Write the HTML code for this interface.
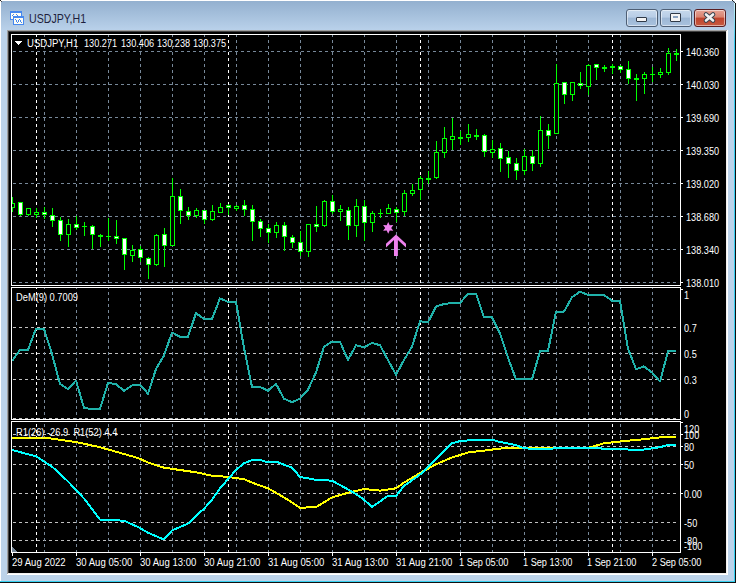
<!DOCTYPE html>
<html><head><meta charset="utf-8"><style>
html,body{margin:0;padding:0;}
body{width:738px;height:583px;overflow:hidden;position:relative;background:#fff;font-family:"Liberation Sans",sans-serif;}
.win{position:absolute;left:0;top:0;width:735px;height:582px;background:#bcd3ea;}
.tb{position:absolute;left:1px;top:1px;width:733px;height:29px;background:linear-gradient(#93b0cf,#b9d1ea);}
.title{position:absolute;left:29px;top:12px;font-size:12.5px;line-height:14px;color:#1e1e3c;transform:scaleX(0.85);transform-origin:0 0;}
.client{position:absolute;left:7px;top:30px;width:721px;height:545px;background:#000;}
svg{position:absolute;left:0;top:0;}
.t{position:absolute;font-size:10px;color:#fff;white-space:nowrap;line-height:10px;transform:scaleX(0.915);transform-origin:0 0;}
.th{position:absolute;font-size:10px;color:#fff;white-space:nowrap;line-height:10px;transform:scaleX(0.955);transform-origin:0 0;}
.ti{position:absolute;font-size:10px;color:#fff;white-space:nowrap;line-height:10px;transform:scaleX(0.93);transform-origin:0 0;}
.tt{position:absolute;font-size:10px;color:#fff;white-space:nowrap;line-height:10px;transform:scaleX(0.955);transform-origin:0 0;}
.btn{position:absolute;top:9px;width:30px;height:16px;border:1px solid #4e5f75;border-radius:3px;box-sizing:content-box;
background:linear-gradient(#c6d8ec 0%,#b8cde6 45%,#9db7d5 50%,#a9c2de 100%);box-shadow:inset 0 0 0 1px rgba(255,255,255,.5);}
.close{background:linear-gradient(#e7a496 0%,#d9826f 45%,#c0432c 50%,#c75a40 100%);border-color:#5a1e22;}
</style></head><body>
<div class="win"></div>
<div class="tb"></div>
<div style="position:absolute;left:0;top:0;width:736px;height:1px;background:#fff"></div>
<div style="position:absolute;left:0;top:0;width:1px;height:582px;background:#fff"></div>
<div style="position:absolute;left:734px;top:2px;width:1px;height:580px;background:linear-gradient(#d4f4fa 0px,#9ee6f6 14px,#38cdf0 40px,#35d0f0 100%)"></div>
<div style="position:absolute;left:735px;top:3px;width:1px;height:580px;background:#101010"></div>
<div style="position:absolute;left:732px;top:0px;width:1px;height:1px;background:#202020"></div>
<div style="position:absolute;left:733px;top:1px;width:1px;height:1px;background:#303030"></div>
<div style="position:absolute;left:734px;top:2px;width:1px;height:1px;background:#404040"></div>
<div style="position:absolute;left:0px;top:0px;width:1px;height:1px;background:#202020"></div>
<div style="position:absolute;left:1px;top:1px;width:1px;height:1px;background:#505050"></div>
<div style="position:absolute;left:0;top:581px;width:735px;height:1px;background:#35d0f0"></div>
<div style="position:absolute;left:0;top:582px;width:736px;height:1px;background:#101010"></div>
<div style="position:absolute;left:7px;top:30px;width:721px;height:545px;background:#fff"></div>
<div style="position:absolute;left:7px;top:30px;width:720px;height:544px;background:#a0a0a0"></div>
<div style="position:absolute;left:8px;top:31px;width:719px;height:543px;background:#f0f0f0"></div>
<div style="position:absolute;left:8px;top:31px;width:718px;height:542px;background:#404040"></div>
<div style="position:absolute;left:9px;top:32px;width:717px;height:541px;background:#000"></div>
<div class="title">USDJPY,H1</div>
<svg width="26" height="27" style="left:0;top:0" viewBox="0 0 26 27" shape-rendering="crispEdges">
<rect x="10" y="11" width="12" height="9" fill="#4688ee"/><rect x="11" y="13" width="10" height="6" fill="#fffef4"/>
<rect x="13" y="16" width="11" height="9" fill="#4688ee"/><rect x="14" y="18" width="9" height="6" fill="#fffef4"/>
<path d="M12 15h1M13 14h1M16 14h1M17 15h1M15 19h1M16 20h1M16 21h1M17 22h1M18 21h1M18 20h1M19 19h1M20 20h1M20 21h1M21 22h1" stroke="#4688ee" transform="translate(0,0.5)"/>
</svg>
<div class="btn" style="left:626px"><div style="position:absolute;left:9px;top:7px;width:9px;height:3px;border:1px solid #303a48;border-radius:1px;background:#f4f4f4"></div></div>
<div class="btn" style="left:660px"><div style="position:absolute;left:9px;top:3px;width:9px;height:7px;border:1px solid #303a48;border-radius:1px;background:#f4f4f4"><div style="position:absolute;left:2px;top:2px;width:5px;height:2px;background:#8aa2c0;border:0px solid #5a6a80"></div></div></div>
<div class="btn close" style="left:694px"><svg width="30" height="16" style="left:0;top:0"><path d="M11 4.5L18 10.5M18 4.5L11 10.5" stroke="#3a4450" stroke-width="4.6" stroke-linecap="round"/><path d="M11 4.5L18 10.5M18 4.5L11 10.5" stroke="#f2f2f2" stroke-width="2.6" stroke-linecap="round"/></svg></div>
<svg width="738" height="583" viewBox="0 0 738 583" shape-rendering="crispEdges"><defs>
<clipPath id="cm"><rect x="12" y="35" width="668" height="250"/></clipPath>
<clipPath id="c1"><rect x="12" y="288" width="668" height="131"/></clipPath>
<clipPath id="c2"><rect x="12" y="422" width="668" height="130"/></clipPath>
</defs><path d="M12 51.5H678" stroke="#778899" stroke-dasharray="3 3" stroke-dashoffset="5"/><path d="M12 84.5H678" stroke="#778899" stroke-dasharray="3 3" stroke-dashoffset="5"/><path d="M12 117.5H678" stroke="#778899" stroke-dasharray="3 3" stroke-dashoffset="5"/><path d="M12 150.5H678" stroke="#778899" stroke-dasharray="3 3" stroke-dashoffset="5"/><path d="M12 183.5H678" stroke="#778899" stroke-dasharray="3 3" stroke-dashoffset="5"/><path d="M12 216.5H678" stroke="#778899" stroke-dasharray="3 3" stroke-dashoffset="5"/><path d="M12 249.5H678" stroke="#778899" stroke-dasharray="3 3" stroke-dashoffset="5"/><path d="M12 282.5H678" stroke="#778899" stroke-dasharray="3 3" stroke-dashoffset="5"/><path d="M44.5 35V285" stroke="#778899" stroke-dasharray="3 3" stroke-dashoffset="1"/><path d="M76.5 35V285" stroke="#778899" stroke-dasharray="3 3" stroke-dashoffset="1"/><path d="M108.5 35V285" stroke="#778899" stroke-dasharray="3 3" stroke-dashoffset="1"/><path d="M140.5 35V285" stroke="#778899" stroke-dasharray="3 3" stroke-dashoffset="1"/><path d="M172.5 35V285" stroke="#778899" stroke-dasharray="3 3" stroke-dashoffset="1"/><path d="M204.5 35V285" stroke="#778899" stroke-dasharray="3 3" stroke-dashoffset="1"/><path d="M236.5 35V285" stroke="#778899" stroke-dasharray="3 3" stroke-dashoffset="1"/><path d="M268.5 35V285" stroke="#778899" stroke-dasharray="3 3" stroke-dashoffset="1"/><path d="M300.5 35V285" stroke="#778899" stroke-dasharray="3 3" stroke-dashoffset="1"/><path d="M332.5 35V285" stroke="#778899" stroke-dasharray="3 3" stroke-dashoffset="1"/><path d="M364.5 35V285" stroke="#778899" stroke-dasharray="3 3" stroke-dashoffset="1"/><path d="M396.5 35V285" stroke="#778899" stroke-dasharray="3 3" stroke-dashoffset="1"/><path d="M428.5 35V285" stroke="#778899" stroke-dasharray="3 3" stroke-dashoffset="1"/><path d="M460.5 35V285" stroke="#778899" stroke-dasharray="3 3" stroke-dashoffset="1"/><path d="M492.5 35V285" stroke="#778899" stroke-dasharray="3 3" stroke-dashoffset="1"/><path d="M524.5 35V285" stroke="#778899" stroke-dasharray="3 3" stroke-dashoffset="1"/><path d="M556.5 35V285" stroke="#778899" stroke-dasharray="3 3" stroke-dashoffset="1"/><path d="M588.5 35V285" stroke="#778899" stroke-dasharray="3 3" stroke-dashoffset="1"/><path d="M620.5 35V285" stroke="#778899" stroke-dasharray="3 3" stroke-dashoffset="1"/><path d="M652.5 35V285" stroke="#778899" stroke-dasharray="3 3" stroke-dashoffset="1"/><path d="M36.5 35V285" stroke="#ffffff" stroke-dasharray="3 3" stroke-dashoffset="1"/><path d="M228.5 35V285" stroke="#ffffff" stroke-dasharray="3 3" stroke-dashoffset="1"/><path d="M420.5 35V285" stroke="#ffffff" stroke-dasharray="3 3" stroke-dashoffset="1"/><path d="M612.5 35V285" stroke="#ffffff" stroke-dasharray="3 3" stroke-dashoffset="1"/><path d="M12 327.5H678" stroke="#c0c0c0" stroke-dasharray="3 3" stroke-dashoffset="5"/><path d="M12 353.5H678" stroke="#c0c0c0" stroke-dasharray="3 3" stroke-dashoffset="5"/><path d="M12 379.5H678" stroke="#c0c0c0" stroke-dasharray="3 3" stroke-dashoffset="5"/><path d="M12 418.5H678" stroke="#c0c0c0" stroke-dasharray="3 3" stroke-dashoffset="5"/><path d="M44.5 288V419" stroke="#778899" stroke-dasharray="3 3" stroke-dashoffset="2"/><path d="M76.5 288V419" stroke="#778899" stroke-dasharray="3 3" stroke-dashoffset="2"/><path d="M108.5 288V419" stroke="#778899" stroke-dasharray="3 3" stroke-dashoffset="2"/><path d="M140.5 288V419" stroke="#778899" stroke-dasharray="3 3" stroke-dashoffset="2"/><path d="M172.5 288V419" stroke="#778899" stroke-dasharray="3 3" stroke-dashoffset="2"/><path d="M204.5 288V419" stroke="#778899" stroke-dasharray="3 3" stroke-dashoffset="2"/><path d="M236.5 288V419" stroke="#778899" stroke-dasharray="3 3" stroke-dashoffset="2"/><path d="M268.5 288V419" stroke="#778899" stroke-dasharray="3 3" stroke-dashoffset="2"/><path d="M300.5 288V419" stroke="#778899" stroke-dasharray="3 3" stroke-dashoffset="2"/><path d="M332.5 288V419" stroke="#778899" stroke-dasharray="3 3" stroke-dashoffset="2"/><path d="M364.5 288V419" stroke="#778899" stroke-dasharray="3 3" stroke-dashoffset="2"/><path d="M396.5 288V419" stroke="#778899" stroke-dasharray="3 3" stroke-dashoffset="2"/><path d="M428.5 288V419" stroke="#778899" stroke-dasharray="3 3" stroke-dashoffset="2"/><path d="M460.5 288V419" stroke="#778899" stroke-dasharray="3 3" stroke-dashoffset="2"/><path d="M492.5 288V419" stroke="#778899" stroke-dasharray="3 3" stroke-dashoffset="2"/><path d="M524.5 288V419" stroke="#778899" stroke-dasharray="3 3" stroke-dashoffset="2"/><path d="M556.5 288V419" stroke="#778899" stroke-dasharray="3 3" stroke-dashoffset="2"/><path d="M588.5 288V419" stroke="#778899" stroke-dasharray="3 3" stroke-dashoffset="2"/><path d="M620.5 288V419" stroke="#778899" stroke-dasharray="3 3" stroke-dashoffset="2"/><path d="M652.5 288V419" stroke="#778899" stroke-dasharray="3 3" stroke-dashoffset="2"/><path d="M36.5 288V419" stroke="#ffffff" stroke-dasharray="3 3" stroke-dashoffset="2"/><path d="M228.5 288V419" stroke="#ffffff" stroke-dasharray="3 3" stroke-dashoffset="2"/><path d="M420.5 288V419" stroke="#ffffff" stroke-dasharray="3 3" stroke-dashoffset="2"/><path d="M612.5 288V419" stroke="#ffffff" stroke-dasharray="3 3" stroke-dashoffset="2"/><path d="M12 434.5H678" stroke="#c0c0c0" stroke-dasharray="3 3" stroke-dashoffset="5"/><path d="M12 446.5H678" stroke="#c0c0c0" stroke-dasharray="3 3" stroke-dashoffset="5"/><path d="M12 464.5H678" stroke="#c0c0c0" stroke-dasharray="3 3" stroke-dashoffset="5"/><path d="M12 493.5H678" stroke="#c0c0c0" stroke-dasharray="3 3" stroke-dashoffset="5"/><path d="M12 522.5H678" stroke="#c0c0c0" stroke-dasharray="3 3" stroke-dashoffset="5"/><path d="M12 540.5H678" stroke="#c0c0c0" stroke-dasharray="3 3" stroke-dashoffset="5"/><path d="M44.5 422V552" stroke="#778899" stroke-dasharray="3 3" stroke-dashoffset="4"/><path d="M76.5 422V552" stroke="#778899" stroke-dasharray="3 3" stroke-dashoffset="4"/><path d="M108.5 422V552" stroke="#778899" stroke-dasharray="3 3" stroke-dashoffset="4"/><path d="M140.5 422V552" stroke="#778899" stroke-dasharray="3 3" stroke-dashoffset="4"/><path d="M172.5 422V552" stroke="#778899" stroke-dasharray="3 3" stroke-dashoffset="4"/><path d="M204.5 422V552" stroke="#778899" stroke-dasharray="3 3" stroke-dashoffset="4"/><path d="M236.5 422V552" stroke="#778899" stroke-dasharray="3 3" stroke-dashoffset="4"/><path d="M268.5 422V552" stroke="#778899" stroke-dasharray="3 3" stroke-dashoffset="4"/><path d="M300.5 422V552" stroke="#778899" stroke-dasharray="3 3" stroke-dashoffset="4"/><path d="M332.5 422V552" stroke="#778899" stroke-dasharray="3 3" stroke-dashoffset="4"/><path d="M364.5 422V552" stroke="#778899" stroke-dasharray="3 3" stroke-dashoffset="4"/><path d="M396.5 422V552" stroke="#778899" stroke-dasharray="3 3" stroke-dashoffset="4"/><path d="M428.5 422V552" stroke="#778899" stroke-dasharray="3 3" stroke-dashoffset="4"/><path d="M460.5 422V552" stroke="#778899" stroke-dasharray="3 3" stroke-dashoffset="4"/><path d="M492.5 422V552" stroke="#778899" stroke-dasharray="3 3" stroke-dashoffset="4"/><path d="M524.5 422V552" stroke="#778899" stroke-dasharray="3 3" stroke-dashoffset="4"/><path d="M556.5 422V552" stroke="#778899" stroke-dasharray="3 3" stroke-dashoffset="4"/><path d="M588.5 422V552" stroke="#778899" stroke-dasharray="3 3" stroke-dashoffset="4"/><path d="M620.5 422V552" stroke="#778899" stroke-dasharray="3 3" stroke-dashoffset="4"/><path d="M652.5 422V552" stroke="#778899" stroke-dasharray="3 3" stroke-dashoffset="4"/><path d="M36.5 422V552" stroke="#ffffff" stroke-dasharray="3 3" stroke-dashoffset="4"/><path d="M228.5 422V552" stroke="#ffffff" stroke-dasharray="3 3" stroke-dashoffset="4"/><path d="M420.5 422V552" stroke="#ffffff" stroke-dasharray="3 3" stroke-dashoffset="4"/><path d="M612.5 422V552" stroke="#ffffff" stroke-dasharray="3 3" stroke-dashoffset="4"/><g clip-path="url(#cm)"><path d="M12.5 197V212" stroke="#00ff00"/><rect x="10.5" y="203.5" width="4" height="4" fill="#000" stroke="#00ff00"/><path d="M20.5 202V216" stroke="#00ff00"/><rect x="18.5" y="202.5" width="4" height="12" fill="#fff" stroke="#00ff00"/><path d="M28.5 208V216" stroke="#00ff00"/><rect x="26.5" y="208.5" width="4" height="6" fill="#000" stroke="#00ff00"/><path d="M36.5 208V218" stroke="#00ff00"/><rect x="34.5" y="212.5" width="4" height="2" fill="#000" stroke="#00ff00"/><path d="M44.5 207V219" stroke="#00ff00"/><rect x="42.5" y="212.5" width="4" height="2" fill="#fff" stroke="#00ff00"/><path d="M52.5 208V227" stroke="#00ff00"/><rect x="50.5" y="215.5" width="4" height="5" fill="#fff" stroke="#00ff00"/><path d="M60.5 217V241" stroke="#00ff00"/><rect x="58.5" y="220.5" width="4" height="14" fill="#fff" stroke="#00ff00"/><path d="M68.5 219V247" stroke="#00ff00"/><rect x="66.5" y="224.5" width="4" height="10" fill="#000" stroke="#00ff00"/><path d="M76.5 216V230" stroke="#00ff00"/><rect x="74.5" y="224.5" width="4" height="3" fill="#fff" stroke="#00ff00"/><path d="M84.5 222V236" stroke="#00ff00"/><rect x="82" y="226" width="5" height="1" fill="#00ff00"/><path d="M92.5 225V249" stroke="#00ff00"/><rect x="90.5" y="226.5" width="4" height="8" fill="#fff" stroke="#00ff00"/><path d="M100.5 234V247" stroke="#00ff00"/><rect x="98.5" y="235.5" width="4" height="1" fill="#000" stroke="#00ff00"/><path d="M108.5 218V241" stroke="#00ff00"/><rect x="106" y="236" width="5" height="1" fill="#00ff00"/><path d="M116.5 220V244" stroke="#00ff00"/><rect x="114.5" y="236.5" width="4" height="2" fill="#fff" stroke="#00ff00"/><path d="M124.5 238V270" stroke="#00ff00"/><rect x="122.5" y="238.5" width="4" height="16" fill="#fff" stroke="#00ff00"/><path d="M132.5 245V262" stroke="#00ff00"/><rect x="130.5" y="250.5" width="4" height="5" fill="#000" stroke="#00ff00"/><path d="M140.5 246V262" stroke="#00ff00"/><rect x="138.5" y="249.5" width="4" height="8" fill="#fff" stroke="#00ff00"/><path d="M148.5 257V279" stroke="#00ff00"/><rect x="146.5" y="258.5" width="4" height="6" fill="#fff" stroke="#00ff00"/><path d="M156.5 234V266" stroke="#00ff00"/><rect x="154.5" y="235.5" width="4" height="29" fill="#000" stroke="#00ff00"/><path d="M164.5 228V267" stroke="#00ff00"/><rect x="162.5" y="234.5" width="4" height="11" fill="#fff" stroke="#00ff00"/><path d="M172.5 178V246" stroke="#00ff00"/><rect x="170.5" y="196.5" width="4" height="49" fill="#000" stroke="#00ff00"/><path d="M180.5 189V224" stroke="#00ff00"/><rect x="178.5" y="196.5" width="4" height="14" fill="#fff" stroke="#00ff00"/><path d="M188.5 207V220" stroke="#00ff00"/><rect x="186.5" y="211.5" width="4" height="4" fill="#fff" stroke="#00ff00"/><path d="M196.5 208V218" stroke="#00ff00"/><rect x="194.5" y="210.5" width="4" height="5" fill="#000" stroke="#00ff00"/><path d="M204.5 210V224" stroke="#00ff00"/><rect x="202.5" y="210.5" width="4" height="9" fill="#fff" stroke="#00ff00"/><path d="M212.5 205V221" stroke="#00ff00"/><rect x="210.5" y="211.5" width="4" height="8" fill="#000" stroke="#00ff00"/><path d="M220.5 203V213" stroke="#00ff00"/><rect x="218.5" y="207.5" width="4" height="5" fill="#000" stroke="#00ff00"/><path d="M228.5 204V215" stroke="#00ff00"/><rect x="226.5" y="205.5" width="4" height="2" fill="#fff" stroke="#00ff00"/><path d="M236.5 205V211" stroke="#00ff00"/><rect x="234.5" y="206.5" width="4" height="2" fill="#000" stroke="#00ff00"/><path d="M244.5 200V216" stroke="#00ff00"/><rect x="242.5" y="205.5" width="4" height="4" fill="#fff" stroke="#00ff00"/><path d="M252.5 205V241" stroke="#00ff00"/><rect x="250.5" y="209.5" width="4" height="12" fill="#fff" stroke="#00ff00"/><path d="M260.5 219V237" stroke="#00ff00"/><rect x="258.5" y="221.5" width="4" height="7" fill="#fff" stroke="#00ff00"/><path d="M268.5 224V243" stroke="#00ff00"/><rect x="266.5" y="228.5" width="4" height="4" fill="#fff" stroke="#00ff00"/><path d="M276.5 222V238" stroke="#00ff00"/><rect x="274.5" y="225.5" width="4" height="7" fill="#000" stroke="#00ff00"/><path d="M284.5 222V251" stroke="#00ff00"/><rect x="282.5" y="225.5" width="4" height="11" fill="#fff" stroke="#00ff00"/><path d="M292.5 235V248" stroke="#00ff00"/><rect x="290.5" y="237.5" width="4" height="5" fill="#fff" stroke="#00ff00"/><path d="M300.5 231V256" stroke="#00ff00"/><rect x="298.5" y="242.5" width="4" height="9" fill="#fff" stroke="#00ff00"/><path d="M308.5 224V257" stroke="#00ff00"/><rect x="306.5" y="224.5" width="4" height="27" fill="#000" stroke="#00ff00"/><path d="M316.5 206V232" stroke="#00ff00"/><rect x="314.5" y="224.5" width="4" height="2" fill="#fff" stroke="#00ff00"/><path d="M324.5 200V227" stroke="#00ff00"/><rect x="322.5" y="201.5" width="4" height="24" fill="#000" stroke="#00ff00"/><path d="M332.5 195V214" stroke="#00ff00"/><rect x="330.5" y="201.5" width="4" height="10" fill="#fff" stroke="#00ff00"/><path d="M340.5 205V221" stroke="#00ff00"/><rect x="338.5" y="209.5" width="4" height="2" fill="#000" stroke="#00ff00"/><path d="M348.5 207V240" stroke="#00ff00"/><rect x="346.5" y="210.5" width="4" height="15" fill="#fff" stroke="#00ff00"/><path d="M356.5 199V237" stroke="#00ff00"/><rect x="354.5" y="206.5" width="4" height="19" fill="#000" stroke="#00ff00"/><path d="M364.5 200V241" stroke="#00ff00"/><rect x="362.5" y="206.5" width="4" height="16" fill="#fff" stroke="#00ff00"/><path d="M372.5 211V232" stroke="#00ff00"/><rect x="370.5" y="213.5" width="4" height="9" fill="#000" stroke="#00ff00"/><path d="M380.5 209V218" stroke="#00ff00"/><rect x="378" y="213" width="5" height="1" fill="#00ff00"/><path d="M388.5 204V214" stroke="#00ff00"/><rect x="386.5" y="208.5" width="4" height="5" fill="#000" stroke="#00ff00"/><path d="M396.5 207V222" stroke="#00ff00"/><rect x="394.5" y="209.5" width="4" height="3" fill="#fff" stroke="#00ff00"/><path d="M404.5 190V216" stroke="#00ff00"/><rect x="402.5" y="193.5" width="4" height="18" fill="#000" stroke="#00ff00"/><path d="M412.5 184V196" stroke="#00ff00"/><rect x="410.5" y="190.5" width="4" height="3" fill="#000" stroke="#00ff00"/><path d="M420.5 176V200" stroke="#00ff00"/><rect x="418.5" y="178.5" width="4" height="11" fill="#000" stroke="#00ff00"/><path d="M428.5 171V184" stroke="#00ff00"/><rect x="426" y="178" width="5" height="2" fill="#00ff00"/><path d="M436.5 141V179" stroke="#00ff00"/><rect x="434.5" y="152.5" width="4" height="25" fill="#000" stroke="#00ff00"/><path d="M444.5 127V158" stroke="#00ff00"/><rect x="442.5" y="138.5" width="4" height="14" fill="#000" stroke="#00ff00"/><path d="M452.5 118V150" stroke="#00ff00"/><rect x="450.5" y="136.5" width="4" height="3" fill="#000" stroke="#00ff00"/><path d="M460.5 131V145" stroke="#00ff00"/><rect x="458" y="137" width="5" height="2" fill="#00ff00"/><path d="M468.5 124V142" stroke="#00ff00"/><rect x="466.5" y="134.5" width="4" height="3" fill="#000" stroke="#00ff00"/><path d="M476.5 129V140" stroke="#00ff00"/><rect x="474" y="135" width="5" height="2" fill="#00ff00"/><path d="M484.5 134V157" stroke="#00ff00"/><rect x="482.5" y="135.5" width="4" height="16" fill="#fff" stroke="#00ff00"/><path d="M492.5 140V158" stroke="#00ff00"/><rect x="490.5" y="149.5" width="4" height="3" fill="#000" stroke="#00ff00"/><path d="M500.5 143V172" stroke="#00ff00"/><rect x="498.5" y="148.5" width="4" height="10" fill="#fff" stroke="#00ff00"/><path d="M508.5 151V178" stroke="#00ff00"/><rect x="506.5" y="157.5" width="4" height="6" fill="#fff" stroke="#00ff00"/><path d="M516.5 158V180" stroke="#00ff00"/><rect x="514.5" y="163.5" width="4" height="7" fill="#fff" stroke="#00ff00"/><path d="M524.5 149V175" stroke="#00ff00"/><rect x="522.5" y="156.5" width="4" height="14" fill="#000" stroke="#00ff00"/><path d="M532.5 150V171" stroke="#00ff00"/><rect x="530.5" y="156.5" width="4" height="7" fill="#fff" stroke="#00ff00"/><path d="M540.5 116V167" stroke="#00ff00"/><rect x="538.5" y="130.5" width="4" height="33" fill="#000" stroke="#00ff00"/><path d="M548.5 124V149" stroke="#00ff00"/><rect x="546.5" y="130.5" width="4" height="5" fill="#fff" stroke="#00ff00"/><path d="M556.5 64V134" stroke="#00ff00"/><rect x="554.5" y="83.5" width="4" height="50" fill="#000" stroke="#00ff00"/><path d="M564.5 82V104" stroke="#00ff00"/><rect x="562.5" y="82.5" width="4" height="12" fill="#fff" stroke="#00ff00"/><path d="M572.5 82V101" stroke="#00ff00"/><rect x="570.5" y="82.5" width="4" height="12" fill="#000" stroke="#00ff00"/><path d="M580.5 72V89" stroke="#00ff00"/><rect x="578.5" y="83.5" width="4" height="2" fill="#fff" stroke="#00ff00"/><path d="M588.5 64V95" stroke="#00ff00"/><rect x="586.5" y="65.5" width="4" height="21" fill="#000" stroke="#00ff00"/><path d="M596.5 64V80" stroke="#00ff00"/><rect x="594.5" y="64.5" width="4" height="3" fill="#fff" stroke="#00ff00"/><path d="M604.5 65V72" stroke="#00ff00"/><rect x="602" y="67" width="5" height="2" fill="#00ff00"/><path d="M612.5 64V74" stroke="#00ff00"/><rect x="610" y="66" width="5" height="2" fill="#00ff00"/><path d="M620.5 65V73" stroke="#00ff00"/><rect x="618.5" y="66.5" width="4" height="3" fill="#fff" stroke="#00ff00"/><path d="M628.5 61V84" stroke="#00ff00"/><rect x="626.5" y="69.5" width="4" height="9" fill="#fff" stroke="#00ff00"/><path d="M636.5 74V101" stroke="#00ff00"/><rect x="634" y="78" width="5" height="2" fill="#00ff00"/><path d="M644.5 72V94" stroke="#00ff00"/><rect x="642.5" y="74.5" width="4" height="4" fill="#000" stroke="#00ff00"/><path d="M652.5 67V82" stroke="#00ff00"/><rect x="650" y="74" width="5" height="1" fill="#00ff00"/><path d="M660.5 68V78" stroke="#00ff00"/><rect x="658.5" y="72.5" width="4" height="2" fill="#000" stroke="#00ff00"/><path d="M668.5 48V75" stroke="#00ff00"/><rect x="666.5" y="53.5" width="4" height="19" fill="#000" stroke="#00ff00"/><path d="M676.5 49V61" stroke="#00ff00"/><rect x="674" y="53" width="5" height="2" fill="#00ff00"/></g><g clip-path="url(#c1)"><polyline points="12,361 20,350 28,350 36,328.5 44,329 52,354 60,384 68,389 76,380.5 84,408 92,409 100,409 108,383 116,384 124,391 132,385.5 140,384.6 148,393.7 156,369 164,355.4 172,332.6 180,336.7 188,336.7 196,313.2 204,318.9 212,318.9 220,298.4 228,301.8 236,301.8 244,348 252,386.9 260,386.9 268,390.8 276,383.9 284,398.7 292,402.2 300,398.7 308,389.6 316,372.5 324,346.7 332,341.7 340,341.7 348,360 356,345.2 364,347.4 372,342.9 380,345.2 388,360 396,374.8 404,360 412,346.7 420,321.2 428,322.3 436,306.4 444,304.1 452,303 460,303 468,293.8 476,293.8 484,317.3 492,317.3 500,333.7 508,357.7 516,379.4 524,379.4 532,379.4 540,351.3 548,350.9 556,311.6 564,311.6 572,297.3 580,291.6 588,295 596,295 604,295 612,300.7 620,300.7 628,348.6 636,369.1 644,366.4 652,372.5 660,381.6 668,351.3 676,350.9" fill="none" stroke="#20b2aa" stroke-width="2" stroke-linejoin="round"/></g><g clip-path="url(#c2)"><polyline points="12,437.6 44,437.6 76,442 100,447.2 124,454 138,458 148,462.5 164,467.7 196,472.3 212,475.7 228,476.9 244,479.2 258,484.9 268,488.3 284,497.4 300,507.7 316,507.2 332,497.4 348,492.8 364,489 380,490.6 396,488.3 404,482.6 420,473 436,464.3 452,457.5 468,452.5 484,450.6 498,448.8 508,447.9 588,447.9 604,443.3 620,441.5 644,439.2 660,437.4 676,436.5" fill="none" stroke="#ffff00" stroke-width="2" stroke-linejoin="round"/><polyline points="12,450 36,456.3 52,466.6 68,481.4 84,498.5 100,519.5 124,520.7 138,527 148,532.7 164,539.6 172,530.5 188,523.6 196,515.6 204,508.8 212,499.7 220,488.3 228,479.2 236,470 244,463.2 252,460.2 260,459.8 268,462.5 276,461.6 292,467.7 300,476.9 316,479.8 332,480.7 348,489.4 356,494 364,499.7 372,507 388,495.8 396,495.8 404,486 420,474.6 436,458.6 452,443.3 460,441.1 476,439.7 492,439.7 500,442 516,445 524,448.4 540,448.8 580,447.9 612,448.8 628,449.5 644,449.5 660,447.2 668,445 676,445" fill="none" stroke="#00ffff" stroke-width="2" stroke-linejoin="round"/></g><path d="M11.5 34.5H680.5V285.5H11.5Z" fill="none" stroke="#fff"/><path d="M11.5 287.5H680.5V419.5H11.5Z" fill="none" stroke="#fff"/><path d="M11.5 421.5H680.5V552.5H11.5Z" fill="none" stroke="#fff"/><path d="M681 51.5H683" stroke="#fff"/><path d="M681 84.5H683" stroke="#fff"/><path d="M681 117.5H683" stroke="#fff"/><path d="M681 150.5H683" stroke="#fff"/><path d="M681 183.5H683" stroke="#fff"/><path d="M681 216.5H683" stroke="#fff"/><path d="M681 249.5H683" stroke="#fff"/><path d="M681 282.5H683" stroke="#fff"/><path d="M681 289.5H683" stroke="#fff"/><path d="M681 422.5H683" stroke="#fff"/><path d="M681 434.5H683" stroke="#fff"/><path d="M681 446.5H683" stroke="#fff"/><path d="M681 464.5H683" stroke="#fff"/><path d="M681 493.5H683" stroke="#fff"/><path d="M12.5 553V556" stroke="#fff"/><path d="M76.5 553V556" stroke="#fff"/><path d="M140.5 553V556" stroke="#fff"/><path d="M204.5 553V556" stroke="#fff"/><path d="M268.5 553V556" stroke="#fff"/><path d="M332.5 553V556" stroke="#fff"/><path d="M396.5 553V556" stroke="#fff"/><path d="M460.5 553V556" stroke="#fff"/><path d="M524.5 553V556" stroke="#fff"/><path d="M588.5 553V556" stroke="#fff"/><path d="M652.5 553V556" stroke="#fff"/><path d="M12 546.5L12 552L18 552Z" fill="#778899"/><path d="M15 41H22L18.5 45Z" fill="#fff"/><polygon points="388.20,222.00 386.70,225.30 383.09,224.95 385.20,227.90 383.09,230.85 386.70,230.50 388.20,233.80 389.70,230.50 393.31,230.85 391.20,227.90 393.31,224.95 389.70,225.30" fill="#ee82ee" shape-rendering="geometricPrecision"/><polygon points="396,234.6 406,243.8 406,247.6 397.9,240 397.9,256 394,256 394,240 386,247.5 386,243.8" fill="#ee82ee" shape-rendering="geometricPrecision"/></svg>
<div class="t" style="left:686px;top:48px">140.360</div><div class="t" style="left:686px;top:81px">140.030</div><div class="t" style="left:686px;top:114px">139.690</div><div class="t" style="left:686px;top:147px">139.350</div><div class="t" style="left:686px;top:180px">139.020</div><div class="t" style="left:686px;top:213px">138.680</div><div class="t" style="left:686px;top:246px">138.340</div><div class="t" style="left:686px;top:279px">138.010</div><div class="t" style="left:684px;top:291.0px">1</div><div class="t" style="left:684px;top:324.0px">0.7</div><div class="t" style="left:684px;top:350.0px">0.5</div><div class="t" style="left:684px;top:376.0px">0.3</div><div class="t" style="left:684px;top:409.5px">0</div><div class="t" style="left:683.5px;top:424.7px">120</div><div class="t" style="left:683.5px;top:431.0px">100</div><div class="t" style="left:683.5px;top:443.0px">80</div><div class="t" style="left:683.5px;top:461.2px">50</div><div class="t" style="left:683.5px;top:489.8px">0.00</div><div class="t" style="left:683.5px;top:519.0px">-50</div><div class="t" style="left:683.5px;top:536.7px">-80</div><div class="t" style="left:683.5px;top:541.8px">-100</div><div class="tt" style="left:11.5px;top:558px">29 Aug 2022</div><div class="tt" style="left:75.5px;top:558px">30 Aug 05:00</div><div class="tt" style="left:139.5px;top:558px">30 Aug 13:00</div><div class="tt" style="left:203.5px;top:558px">30 Aug 21:00</div><div class="tt" style="left:267.5px;top:558px">31 Aug 05:00</div><div class="tt" style="left:331.5px;top:558px">31 Aug 13:00</div><div class="tt" style="left:395.5px;top:558px">31 Aug 21:00</div><div class="tt" style="left:458.5px;top:558px;transform:scaleX(0.917)">1 Sep 05:00</div><div class="tt" style="left:522.5px;top:558px;transform:scaleX(0.917)">1 Sep 13:00</div><div class="tt" style="left:586.5px;top:558px;transform:scaleX(0.917)">1 Sep 21:00</div><div class="tt" style="left:651.5px;top:558px;transform:scaleX(0.917)">2 Sep 05:00</div><div class="th" style="left:27px;top:39px">USDJPY,H1</div><div class="t" style="left:84px;top:39px">130.271</div><div class="t" style="left:120.5px;top:39px">130.406</div><div class="t" style="left:156.5px;top:39px">130.238</div><div class="t" style="left:193px;top:39px">130.375</div><div class="ti" style="left:16px;top:293px">DeM(9) 0.7009</div><div class="ti" style="left:16px;top:427.5px">R1(26) -26.9&nbsp; R1(52) 4.4</div>
</body></html>
